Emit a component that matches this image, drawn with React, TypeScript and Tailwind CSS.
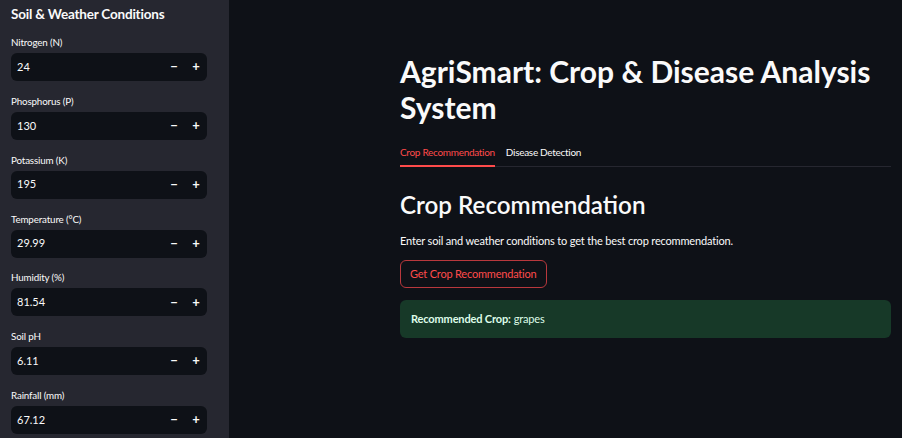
const fields = [
  { label: "Nitrogen (N)", value: "24" },
  { label: "Phosphorus (P)", value: "130" },
  { label: "Potassium (K)", value: "195" },
  { label: "Temperature (°C)", value: "29.99" },
  { label: "Humidity (%)", value: "81.54" },
  { label: "Soil pH", value: "6.11" },
  { label: "Rainfall (mm)", value: "67.12" },
];

const NumberField = ({ label, value }: { label: string; value: string }) => (
  <div className="mb-[12.85px]">
    <div className="h-[14px] mb-[4px] text-[9.8px] tracking-[-0.15px] leading-[14px] text-[#fafafa]">{label}</div>
    <div className="h-[28px] w-[196px] rounded-[6px] bg-[#0e1117] flex items-center pl-[6px]">
      <span className="flex-1 text-[11px] text-[#fafafa]">{value}</span>
      <span className="w-[22px] text-center text-[13px] font-bold text-[#fafafa]">−</span>
      <span className="w-[22px] text-center text-[13px] font-bold text-[#fafafa]">+</span>
    </div>
  </div>
);

const App = () => {
  return (
    <div
      className="flex w-[902px] h-[438px] overflow-hidden bg-[#0e1117] text-[#fafafa]"
      style={{ fontFamily: "Lato, 'Noto Sans', sans-serif" }}
    >
      {/* Sidebar */}
      <div className="w-[229px] shrink-0 bg-[#262730] pl-[11px] pt-[4px]">
        <h2 className="text-[13.5px] tracking-[-0.2px] leading-[20px] font-bold mb-[11px]">
          Soil &amp; Weather Conditions
        </h2>
        {fields.map((f) => (
          <NumberField key={f.label} label={f.label} value={f.value} />
        ))}
      </div>

      {/* Main */}
      <div className="flex-1 pl-[171px] pr-[11px] pt-[53px]">
        <h1 className="text-[30px] leading-[36px] font-bold">
          AgriSmart: Crop &amp; Disease Analysis System
        </h1>

        <div className="mt-[20px] flex border-b border-[#262730] text-[10px] tracking-[-0.3px] leading-[14px]">
          <div className="pb-[6px] border-b-2 border-[#ff4b4b] -mb-px text-[#ff4b4b]">Crop Recommendation</div>
          <div className="pl-[11px] pb-[6px]">Disease Detection</div>
        </div>

        <h2 className="mt-[22px] text-[24.2px] leading-[32px] font-semibold">Crop Recommendation</h2>
        <p className="mt-[12px] text-[11px] tracking-[-0.17px] leading-[16px]">
          Enter soil and weather conditions to get the best crop recommendation.
        </p>

        <button className="mt-[11px] h-[28px] px-[9px] rounded-[6px] border border-[#b8383d] text-[11px] tracking-[-0.2px] text-[#ff4b4b]">
          Get Crop Recommendation
        </button>

        <div className="mt-[12px] h-[38px] rounded-[6px] bg-[#173928] flex items-center px-[11px] text-[11px] tracking-[-0.15px] text-[#dffde9]">
          <span className="font-bold mr-[3px]">Recommended Crop:</span> grapes
        </div>
      </div>
    </div>
  );
};

export default App;
